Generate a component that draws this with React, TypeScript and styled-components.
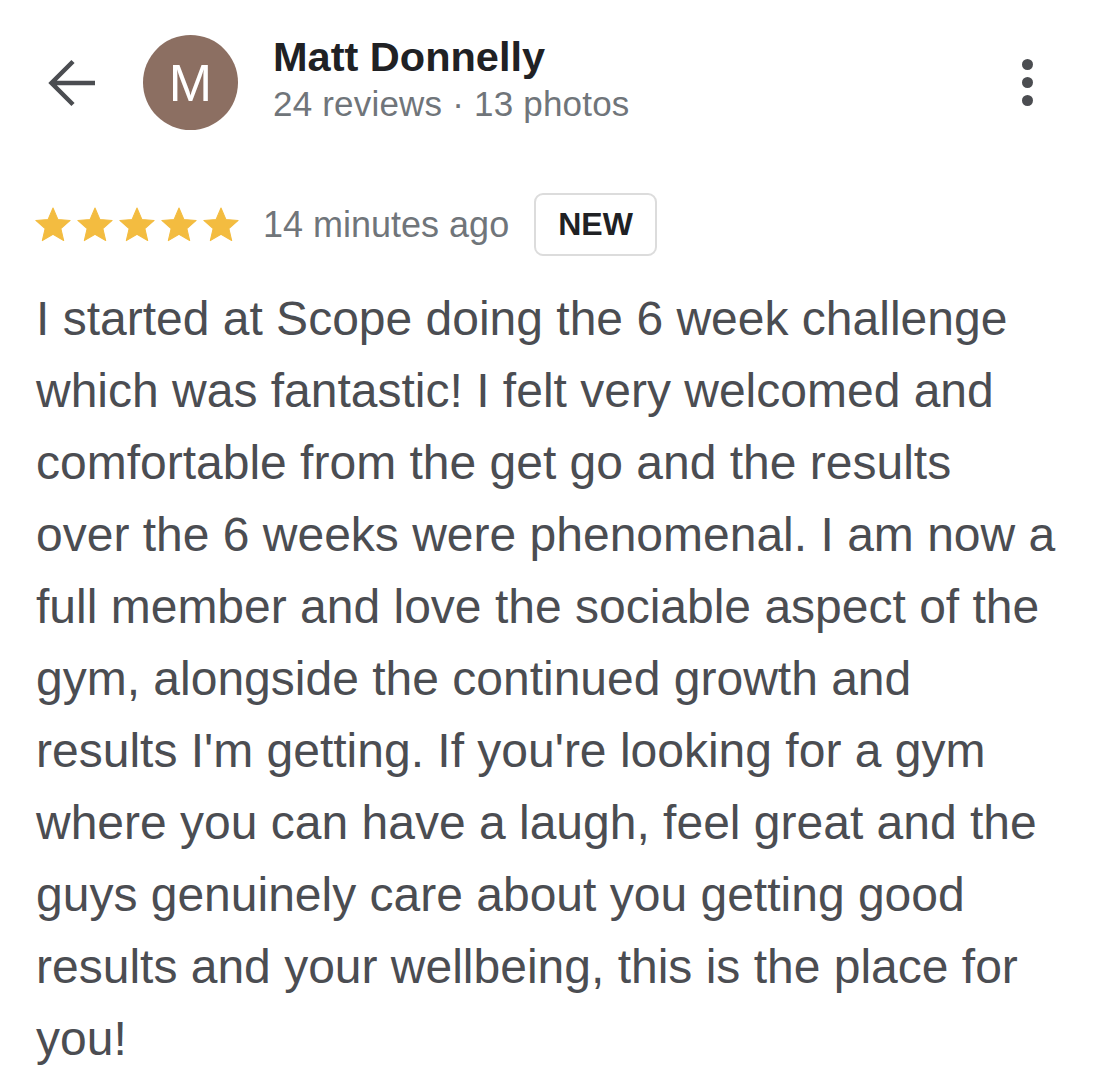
import React from "react";
import styled, { createGlobalStyle } from "styled-components";

const GlobalStyle = createGlobalStyle`
  html, body {
    margin: 0;
    padding: 0;
    background: #ffffff;
  }
  body {
    font-family: "Liberation Sans", Arial, Helvetica, sans-serif;
    -webkit-font-smoothing: antialiased;
  }
`;

const Page = styled.div`
  width: 1112px;
  min-height: 1068px;
  background: #ffffff;
  font-family: "Liberation Sans", Arial, Helvetica, sans-serif;
`;

const Header = styled.header`
  display: flex;
  align-items: center;
  padding: 35px 79px 0 47px;
`;

const BackButton = styled.button`
  width: 50px;
  height: 50px;
  padding: 0;
  margin: 0 46px 0 0;
  border: 0;
  background: transparent;
  display: flex;
  align-items: center;
  justify-content: center;
  color: #4b4d51;
  cursor: pointer;
`;

const Avatar = styled.div`
  width: 95px;
  height: 95px;
  flex: none;
  border-radius: 50%;
  background: #8c6f62;
  color: #ffffff;
  font-size: 52px;
  line-height: 97px;
  text-align: center;
  margin-right: 35px;
`;

const Info = styled.div`
  display: flex;
  flex-direction: column;
  margin-top: -3px;
`;

const Name = styled.div`
  font-size: 41.5px;
  font-weight: 700;
  line-height: 46px;
  color: #202124;
`;

const Sub = styled.div`
  font-size: 35px;
  line-height: 48px;
  letter-spacing: 0.2px;
  color: #70757a;
`;

const Kebab = styled.button`
  margin-left: auto;
  padding: 0;
  border: 0;
  background: transparent;
  display: flex;
  flex-direction: column;
  gap: 7px;
  cursor: pointer;
`;

const Dot = styled.span`
  width: 11px;
  height: 11px;
  border-radius: 50%;
  background: #4b4d51;
`;

const MetaRow = styled.div`
  display: flex;
  align-items: center;
  margin-top: 63px;
  padding-left: 32px;
`;

const Stars = styled.div`
  display: flex;
  margin-right: 21px;
`;

const Time = styled.span`
  font-size: 36px;
  line-height: 40px;
  color: #70757a;
  margin-right: 25px;
`;

const Badge = styled.span`
  display: inline-block;
  border: 2px solid #dcdcdc;
  border-radius: 9px;
  padding: 0 22px;
  font-size: 32px;
  font-weight: 700;
  line-height: 59px;
  color: #202124;
`;

const Body = styled.p`
  margin: 27px 0 0;
  padding: 0 36px;
  font-size: 48px;
  line-height: 72px;
  color: #4b4d52;
`;

const Line = styled.span`
  display: block;
  white-space: nowrap;
`;

const Star = () => (
  <svg width="42" height="42" viewBox="0 0 24 24" aria-hidden="true">
    <path
      d="M12 2.3l2.8 6.5 7 .6-5.3 4.6 1.6 6.9L12 17.3l-6.1 3.6 1.6-6.9L2.2 9.4l7-.6z"
      fill="#f3bc40"
      stroke="#f3bc40"
      strokeWidth="0.6"
      strokeLinejoin="round"
    />
  </svg>
);

const lines = [
  "I started at Scope doing the 6 week challenge",
  "which was fantastic! I felt very welcomed and",
  "comfortable from the get go and the results",
  "over the 6 weeks were phenomenal. I am now a",
  "full member and love the sociable aspect of the",
  "gym, alongside the continued growth and",
  "results I'm getting. If you're looking for a gym",
  "where you can have a laugh, feel great and the",
  "guys genuinely care about you getting good",
  "results and your wellbeing, this is the place for",
  "you!",
];

export default function App() {
  return (
    <Page>
      <GlobalStyle />
      <Header>
        <BackButton aria-label="Back">
          <svg width="50" height="50" viewBox="0 0 50 50" aria-hidden="true">
            <path
              d="M5 25H48M26 3.5L4.5 25L26 46.5"
              fill="none"
              stroke="currentColor"
              strokeWidth="4.5"
              strokeLinejoin="miter"
            />
          </svg>
        </BackButton>
        <Avatar>M</Avatar>
        <Info>
          <Name>Matt Donnelly</Name>
          <Sub>24 reviews · 13 photos</Sub>
        </Info>
        <Kebab aria-label="More options">
          <Dot />
          <Dot />
          <Dot />
        </Kebab>
      </Header>
      <MetaRow>
        <Stars>
          <Star />
          <Star />
          <Star />
          <Star />
          <Star />
        </Stars>
        <Time>14 minutes ago</Time>
        <Badge>NEW</Badge>
      </MetaRow>
      <Body>
        {lines.map((l, i) => (
          <Line key={i}>{l}</Line>
        ))}
      </Body>
    </Page>
  );
}
